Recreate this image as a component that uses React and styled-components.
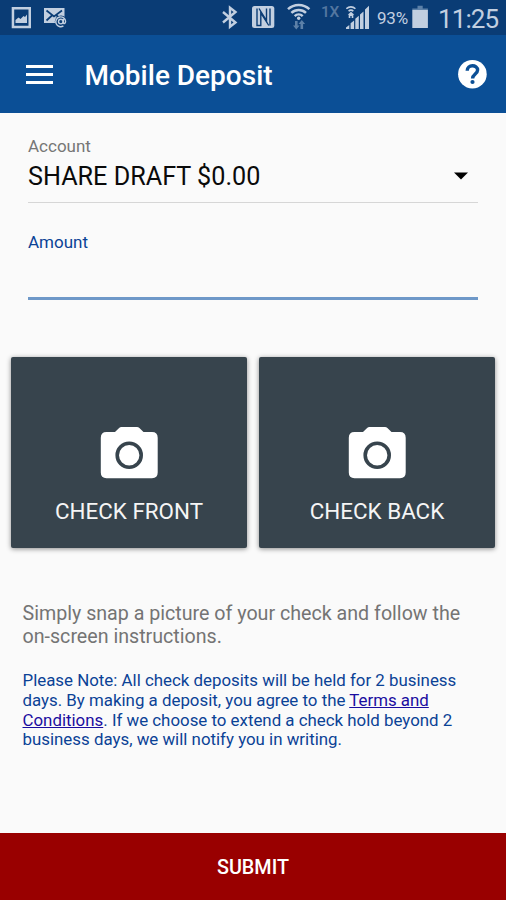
import styled, { createGlobalStyle } from 'styled-components';

const GlobalStyle = createGlobalStyle`
  * {
    box-sizing: border-box;
  }
  body {
    margin: 0;
    font-family: Roboto, 'Liberation Sans', sans-serif;
    background-color: #fafafa;
  }
`;

const Screen = styled.div`
  display: flex;
  flex-direction: column;
  width: 506px;
  height: 900px;
  overflow: hidden;
  background-color: #fafafa;
`;

const StatusBar = styled.div`
  display: flex;
  align-items: flex-start;
  flex: none;
  height: 35px;
  padding-left: 11px;
  background-color: #0a3c75;
  color: #c2cfe0;
`;

const StatusIcon = styled.svg`
  display: block;
  flex: none;
  margin-left: ${({ $gap = 0 }) => $gap}px;
`;

const StatusText = styled.span`
  flex: none;
  width: ${({ $width }) => $width}px;
  margin-left: ${({ $gap = 0 }) => $gap}px;
  padding-top: ${({ $top }) => $top}px;
  font-size: ${({ $size }) => $size}px;
  font-weight: ${({ $weight = 400 }) => $weight};
  letter-spacing: ${({ $spacing = 0 }) => $spacing}px;
  line-height: 1;
  white-space: nowrap;
  opacity: ${({ $faded }) => ($faded ? 0.4 : 1)};
`;

const Header = styled.header`
  display: flex;
  align-items: center;
  flex: none;
  height: 78px;
  padding: 0 19px 0 26px;
  background-color: #0b4f96;
  color: white;
`;

const MenuButton = styled.button`
  display: flex;
  flex-direction: column;
  gap: 5px;
  width: 27px;
  padding: 0;
  border: 0;
  background: none;
`;

const MenuLine = styled.span`
  height: 3px;
  background-color: white;
`;

const Title = styled.h1`
  flex: 1;
  margin: 4px 0 0 31.5px;
  font-size: 28px;
  font-weight: 500;
  line-height: 36px;
  white-space: nowrap;
`;

const HelpButton = styled.button`
  display: flex;
  padding: 0;
  border: 0;
  background: none;
`;

const Form = styled.main`
  display: flex;
  flex-direction: column;
  flex: 1;
`;

const Field = styled.div`
  height: ${({ $height }) => $height}px;
  margin: ${({ $top }) => $top}px 28px 0;
  border-bottom: ${({ $active }) =>
    $active ? '3px solid #6e98c8' : '1px solid #d6d6d6'};
`;

const Label = styled.div`
  font-size: 17px;
  line-height: 20px;
  color: ${({ $active }) => ($active ? '#0b4296' : '#767676')};
`;

const Select = styled.div`
  display: flex;
  align-items: center;
  justify-content: space-between;
  height: 30px;
  margin-top: 5px;
  padding-right: 10px;
  font-size: 25.2px;
  line-height: 30px;
  color: #0a0a0a;
`;

const SelectValue = styled.span`
  padding-top: 2px;
`;

const Photos = styled.div`
  display: grid;
  grid-template-columns: 1fr 1fr;
  gap: 12px;
  margin: 57px 11px 0;
`;

const PhotoButton = styled.button`
  display: flex;
  flex-direction: column;
  align-items: center;
  height: 191px;
  padding: 70px 0 0;
  border: 0;
  border-radius: 2px;
  background-color: #37444d;
  box-shadow: 0 1px 5px rgba(0, 0, 0, 0.45);
  color: #f5f5f5;
  font-family: inherit;
  font-size: 22.4px;
  line-height: 28px;
`;

const PhotoLabel = styled.span`
  margin-top: 18px;
`;

const Hint = styled.p`
  margin: 54px 22.5px 0;
  font-size: 19.65px;
  line-height: 23px;
  color: #747474;
  white-space: nowrap;
`;

const Note = styled.p`
  margin: 23px 22.5px 0;
  font-size: 16.87px;
  line-height: 19.75px;
  color: #0b4296;
  white-space: nowrap;
`;

const TermsLink = styled.a`
  color: #1a0da0;
  text-decoration: underline;
`;

const SubmitButton = styled.button`
  flex: none;
  height: 67px;
  padding: 1px 0 0;
  border: 0;
  background-color: #990000;
  color: white;
  font-family: inherit;
  font-size: 19.8px;
  font-weight: 500;
`;

function PictureIcon() {
  return (
    <StatusIcon width="20" height="35" viewBox="0 0 20 35">
      <path
        fillRule="evenodd"
        fill="currentColor"
        d="M.7 7h19.3v21.3H.7zM3.2 9.5v16.2h14.3V9.5z"
      />
      <path fill="currentColor" d="M4.5 23v-3l3-2.5 2 1.5 3-3 1.5 1 2-2.5V23z" />
    </StatusIcon>
  );
}

function MailIcon() {
  return (
    <StatusIcon $gap={13} width="23" height="35" viewBox="0 0 23 35">
      <path fill="currentColor" d="M0 8h20.5v15H0z" />
      <path
        fill="none"
        stroke="#0a3c75"
        strokeWidth="1.7"
        d="M2.5 10.5 10 16.5l8-6M2.5 20.5l6-5.5M12 15l3 2.5"
      />
      <circle cx="17" cy="21.6" r="6.2" fill="#0a3c75" />
      <g fill="none" stroke="currentColor" strokeWidth="1.4">
        <circle cx="16.8" cy="21.6" r="2.3" />
        <path d="M19.3 19v3.5c0 1.6 2.3 1.3 2.3-1a4.9 4.9 0 1 0-2.2 4.4" />
      </g>
    </StatusIcon>
  );
}

function BluetoothIcon() {
  return (
    <StatusIcon $gap={155} width="16" height="35" viewBox="0 0 16 35">
      <path
        fill="none"
        stroke="currentColor"
        strokeWidth="2.4"
        d="M1 12 13.5 22.5 8 26.8V7.8l5.5 4.2L1 22.5"
      />
    </StatusIcon>
  );
}

function NfcIcon() {
  return (
    <StatusIcon $gap={14} width="23" height="35" viewBox="0 0 23 35">
      <rect y="6" width="22.3" height="22" rx="2.5" fill="currentColor" />
      <g fill="none" stroke="#0a3c75" strokeWidth="1.4">
        <path d="M5 8.5v17h3.8V12.8l8 12.7" />
        <path d="M7 8.5l7.5 12V8.5M18 8.5v17" />
      </g>
    </StatusIcon>
  );
}

function WifiIcon() {
  return (
    <StatusIcon $gap={12} width="24" height="35" viewBox="0 0 24 35">
      <g fill="none" stroke="currentColor" strokeWidth="2.5">
        <path d="M1 9.2a15.5 15.5 0 0 1 21.4 0" />
        <path d="M4.4 12.9a10.5 10.5 0 0 1 14.6 0" />
        <path d="M7.7 16.2a5.8 5.8 0 0 1 8 0" />
      </g>
      <circle cx="11.7" cy="18.3" r="1.7" fill="currentColor" />
      <path
        fill="#5c80a8"
        d="M8 21h2.6v4.5h2L9.3 29.5 6 25.5h2zM13.5 29h2.6v-5h2L14.8 20l-3.3 4h2z"
      />
    </StatusIcon>
  );
}

function SignalIcon() {
  return (
    <StatusIcon $gap={9} width="24" height="35" viewBox="0 0 24 35">
      <path
        fill="currentColor"
        d="M0 29v-1.5l3.3-2.5v4zM4.6 29v-5.8l3.5-2.7V29zM9.3 29V18.8l3.5-3V29zM14 29V14.5l3.5-3V29zM19 29V9.5l4-3.8V29z"
      />
      <g fill="none" stroke="currentColor" strokeWidth="1.6">
        <path d="M.4 8.8a6.3 6.3 0 0 1 9 0" />
        <path d="M2.6 11.2a3.2 3.2 0 0 1 4.7 0" />
      </g>
      <path fill="currentColor" d="m5 11.7 3.3 3.1h-1V18H5.7v-2H4.3v2H2.7v-3.2h-1z" />
    </StatusIcon>
  );
}

function BatteryIcon() {
  return (
    <StatusIcon $gap={3} width="17" height="35" viewBox="0 0 17 35">
      <path fill="#5c80a8" d="M5.5 5.7h5.2v2.7h5.2V10H.3V8.4h5.2z" />
      <path fill="currentColor" d="M.3 10h15.6v18H.3z" />
    </StatusIcon>
  );
}

function HelpIcon() {
  return (
    <svg width="29" height="30" viewBox="0 0 29 30">
      <circle cx="14.4" cy="15.2" r="14.3" fill="white" />
      <path
        fill="none"
        stroke="#0b4f96"
        strokeWidth="3.4"
        d="M9.2 11.8c0-7 10.4-6.4 10.4-.7 0 3.9-5 4-5 8.4"
      />
      <circle cx="14.5" cy="23" r="2.1" fill="#0b4f96" />
    </svg>
  );
}

function CameraIcon() {
  return (
    <svg width="58" height="52" viewBox="0 0 58 52">
      <path
        fill="white"
        d="M21.5 0H37q1.4 0 2.4 1l4.1 4H52q5.7 0 5.7 5.7v34.8q0 5.700-5.700 5.700H6.500Q.8 51.200.8 45.500V10.700Q.8 5 6.500 5H15l4.100-4q1-1 2.400-1z"
      />
      <circle
        cx="29.2"
        cy="28.3"
        r="12"
        fill="none"
        stroke="#37444d"
        strokeWidth="3.6"
      />
    </svg>
  );
}

function PhotoTile({ label }) {
  return (
    <PhotoButton type="button">
      <CameraIcon />
      <PhotoLabel>{label}</PhotoLabel>
    </PhotoButton>
  );
}

export default function App() {
  return (
    <>
      <GlobalStyle />
      <Screen>
        <StatusBar>
          <PictureIcon />
          <MailIcon />
          <BluetoothIcon />
          <NfcIcon />
          <WifiIcon />
          <StatusText
            $gap={10}
            $width={16}
            $top={5}
            $size={15.5}
            $weight={500}
            $spacing={-0.4}
            $faded
          >
            1X
          </StatusText>
          <SignalIcon />
          <StatusText $gap={7} $width={32} $top={10} $size={17} $spacing={-0.2}>
            93%
          </StatusText>
          <BatteryIcon />
          <StatusText $gap={9} $width={62} $top={6} $size={26} $spacing={-0.9}>
            11:25
          </StatusText>
        </StatusBar>
        <Header>
          <MenuButton type="button" aria-label="Menu">
            <MenuLine />
            <MenuLine />
            <MenuLine />
          </MenuButton>
          <Title>Mobile Deposit</Title>
          <HelpButton type="button" aria-label="Help">
            <HelpIcon />
          </HelpButton>
        </Header>
        <Form>
          <Field $top={23} $height={67}>
            <Label>Account</Label>
            <Select>
              <SelectValue>SHARE DRAFT $0.00</SelectValue>
              <svg width="14" height="8" viewBox="0 0 14 8">
                <path d="M0 .5h14l-7 7z" />
              </svg>
            </Select>
          </Field>
          <Field $top={29} $height={68} $active>
            <Label $active>Amount</Label>
          </Field>
          <Photos>
            <PhotoTile label="CHECK FRONT" />
            <PhotoTile label="CHECK BACK" />
          </Photos>
          <Hint>
            Simply snap a picture of your check and follow the
            <br />
            on-screen instructions.
          </Hint>
          <Note>
            Please Note: All check deposits will be held for 2 business
            <br />
            days. By making a deposit, you agree to the{' '}
            <TermsLink>
              Terms and
              <br />
              Conditions
            </TermsLink>
            . If we choose to extend a check hold beyond 2
            <br />
            business days, we will notify you in writing.
          </Note>
        </Form>
        <SubmitButton type="button">SUBMIT</SubmitButton>
      </Screen>
    </>
  );
}
